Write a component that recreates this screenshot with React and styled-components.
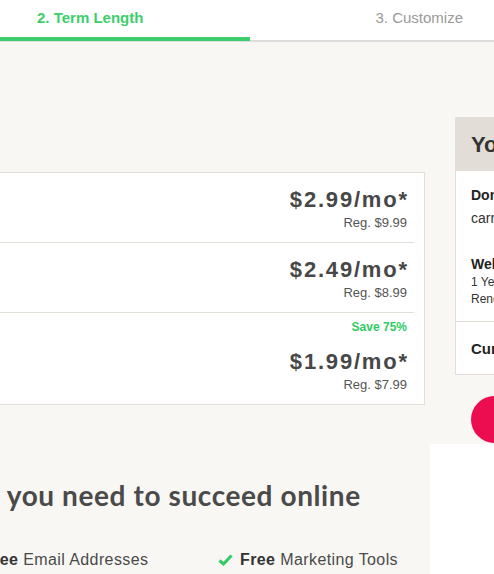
import React from "react";
import styled, { createGlobalStyle } from "styled-components";

const GlobalStyle = createGlobalStyle`
  html, body {
    margin: 0;
    padding: 0;
    background: #f8f7f3;
    overflow: hidden;
  }
  * { box-sizing: border-box; }
`;

const Page = styled.div`
  width: 494px;
  height: 574px;
  overflow: hidden;
  font-family: "Liberation Sans", Arial, sans-serif;
  color: #333;
  background: #f8f7f3;
`;

const Nav = styled.div`
  display: grid;
  grid-template-columns: 250px 1fr;
  height: 42px;
  background: #fff;
  border-bottom: 2px solid #dcdcdc;
`;

const Tab = styled.div`
  height: ${(p) => (p.$active ? "41px" : "40px")};
  display: flex;
  align-items: center;
  justify-content: ${(p) => (p.$active ? "flex-start" : "flex-end")};
  padding: ${(p) => (p.$active ? "0 0 2px 37px" : "0 31px 6px 0")};
  font-size: 15px;
  font-weight: ${(p) => (p.$active ? 700 : 400)};
  color: ${(p) => (p.$active ? "#3ccf6b" : "#9a9a9a")};
  border-bottom: ${(p) => (p.$active ? "4px solid #3ccf6b" : "none")};
`;

const Main = styled.div`
  display: grid;
  grid-template-columns: 445px 300px;
  column-gap: 30px;
  margin-left: -20px;
  padding: 75px 0 1px;
`;

const Card = styled.div`
  margin-top: 55px;
  align-self: start;
  background: #fff;
  border: 1px solid #e3ded7;
`;

const Row = styled.div`
  display: flex;
  flex-direction: column;
  align-items: flex-end;
  margin-right: 10px;
  padding: ${(p) => (p.$tall ? "6px 7px 11px 0" : "13px 7px 11px 0")};
  border-bottom: ${(p) => (p.$last ? "none" : "1px solid #e3ded7")};
`;

const Save = styled.div`
  font-size: 12px;
  font-weight: 700;
  color: #2fcc64;
  line-height: 16px;
  margin-bottom: 13px;
`;

const Price = styled.div`
  font-size: 22px;
  font-weight: 700;
  letter-spacing: 1.8px;
  margin-right: -1.8px;
  line-height: 28px;
  color: #474747;
`;

const Reg = styled.div`
  font-size: 13px;
  line-height: 17px;
  color: #555;
`;

const Side = styled.div`
  display: flex;
  flex-direction: column;
`;

const Panel = styled.div`
  background: #fff;
  border: 1px solid #e3ded7;
`;

const PanelHead = styled.div`
  height: 53px;
  display: flex;
  align-items: center;
  padding-left: 15px;
  background: #e2ddd7;
  font-size: 22px;
  font-weight: 700;
  color: #333;
  white-space: nowrap;
`;

const PanelBody = styled.div`
  padding: 14px 15px 13px;
`;

const Item = styled.div`
  & + & {
    margin-top: 26px;
  }
`;

const ItemTitle = styled.div`
  font-size: 14px;
  font-weight: 700;
  line-height: 20px;
  color: #222;
  white-space: nowrap;
`;

const ItemText = styled.div`
  font-size: ${(p) => (p.$small ? "12px" : "14px")};
  line-height: ${(p) => (p.$small ? "17px" : "20px")};
  margin-top: ${(p) => (p.$gap ? "3px" : "0")};
  color: #333;
  white-space: nowrap;
`;

const Total = styled.div`
  border-top: 1px solid #e3ded7;
  padding: 17px 15px 15px;
  font-size: 15px;
  font-weight: 700;
  line-height: 20px;
  color: #222;
  white-space: nowrap;
`;

const CheckoutButton = styled.button`
  margin: 21px 0 0 16px;
  height: 47px;
  width: 260px;
  border: none;
  border-radius: 24px;
  background: #ec0c50;
  color: #fff;
  font-family: inherit;
  font-size: 16px;
  font-weight: 700;
`;

const Lower = styled.div`
  display: grid;
  grid-template-columns: 430px 1fr;
  height: 200px;
`;

const LowerLeft = styled.div`
  overflow: hidden;
`;

const LowerInner = styled.div`
  margin-left: -150px;
  width: 580px;
  padding-top: 35px;
`;

const Headline = styled.h2`
  margin: 0 0 0 10px;
  font-family: Lato, "Liberation Sans", sans-serif;
  font-size: 28px;
  font-weight: 700;
  letter-spacing: 0.6px;
  line-height: 32px;
  color: #4a4a4a;
  white-space: nowrap;
`;

const Features = styled.div`
  display: grid;
  grid-template-columns: 257px 257px;
  padding-left: 111px;
  margin-top: 39px;
`;

const Feature = styled.div`
  display: flex;
  align-items: center;
  gap: 7px;
  font-size: 16px;
  letter-spacing: 0.4px;
  line-height: 20px;
  color: #4a4a4a;
  white-space: nowrap;

  & b {
    color: #333;
  }
`;

const WhiteBlock = styled.div`
  background: #fff;
`;

const Check = () => (
  <svg width="15" height="12" viewBox="0 0 15 12">
    <path d="M1.5 6.5 L5.5 10 L13.5 1.5" fill="none" stroke="#2fcc64" strokeWidth="3" />
  </svg>
);

const plans = [
  { price: "$2.99/mo*", reg: "Reg. $9.99" },
  { price: "$2.49/mo*", reg: "Reg. $8.99" },
  { price: "$1.99/mo*", reg: "Reg. $7.99", save: "Save 75%" },
];

export default function App() {
  return (
    <Page>
      <GlobalStyle />
      <Nav>
        <Tab $active>2. Term Length</Tab>
        <Tab>3. Customize</Tab>
      </Nav>
      <Main>
        <Card>
          {plans.map((p, i) => (
            <Row key={p.price} $tall={!!p.save} $last={i === plans.length - 1}>
              {p.save && <Save>{p.save}</Save>}
              <Price>{p.price}</Price>
              <Reg>{p.reg}</Reg>
            </Row>
          ))}
        </Card>
        <Side>
          <Panel>
            <PanelHead>Your Cart</PanelHead>
            <PanelBody>
              <Item>
                <ItemTitle>Domain Registration</ItemTitle>
                <ItemText $gap>carrotsandmore.com</ItemText>
              </Item>
              <Item>
                <ItemTitle>Website Builder</ItemTitle>
                <ItemText $small>1 Year Plan</ItemText>
                <ItemText $small>Renews at $9.99/mo</ItemText>
              </Item>
            </PanelBody>
            <Total>Current Total</Total>
          </Panel>
          <CheckoutButton>Continue</CheckoutButton>
        </Side>
      </Main>
      <Lower>
        <LowerLeft>
          <LowerInner>
            <Headline>Everything you need to succeed online</Headline>
            <Features>
              <Feature>
                <Check />
                <span><b>Free</b> Email Addresses</span>
              </Feature>
              <Feature>
                <Check />
                <span><b>Free</b> Marketing Tools</span>
              </Feature>
            </Features>
          </LowerInner>
        </LowerLeft>
        <WhiteBlock />
      </Lower>
    </Page>
  );
}
